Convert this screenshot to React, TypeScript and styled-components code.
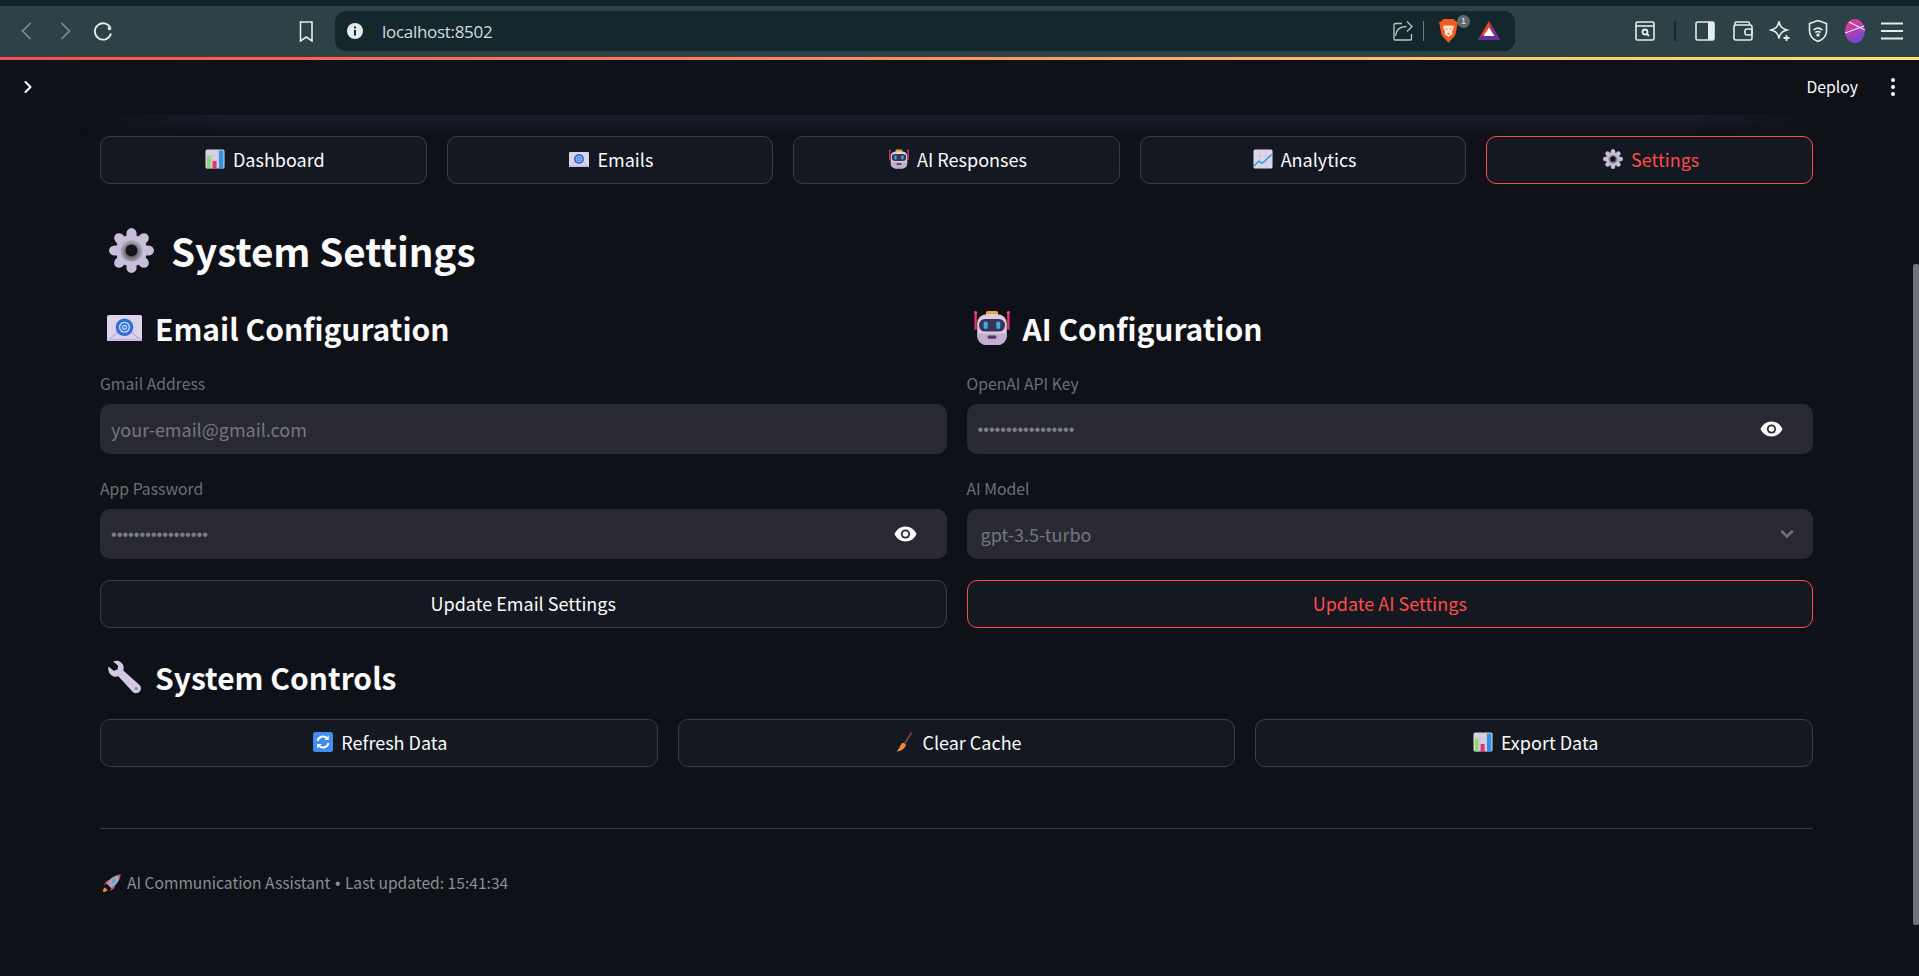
import { ReactNode } from "react";
import styled, { createGlobalStyle } from "styled-components";
import { ChevronDown, ChevronRight } from "lucide-react";

const UI_FONT = `"Noto Sans CJK SC", "Noto Sans", sans-serif`;

const GlobalStyle = createGlobalStyle`
  html, body {
    margin: 0;
    height: 100%;
    overflow: hidden;
    background: #0e1117;
  }
  * { box-sizing: border-box; }
`;

const Window = styled.div`
  width: 100%;
  height: 976px;
  display: flex;
  flex-direction: column;
  overflow: hidden;
  position: relative;
`;

/* ---- browser chrome ---- */

const TabStrip = styled.div`
  height: 6px;
  background: #0e2529;
`;

const Toolbar = styled.div`
  height: 51px;
  background: #2c4246;
  display: flex;
  align-items: center;
  padding: 0 0 1px 8px;
  color: #e6ecec;
`;

const ToolButton = styled.div<{ $w?: number; $dim?: boolean }>`
  width: ${(p) => p.$w ?? 38}px;
  height: 40px;
  flex: none;
  display: flex;
  align-items: center;
  justify-content: center;
  position: relative;
  color: ${(p) => (p.$dim ? "#7f8f92" : "inherit")};
`;

const ToolSpacer = styled.div<{ $w: number }>`
  width: ${(p) => p.$w}px;
  flex: none;
`;

const AddressPill = styled.div`
  width: 1180px;
  height: 40px;
  flex: none;
  background: #12282d;
  border-radius: 11px;
  display: flex;
  align-items: center;
  padding: 0 15px 0 12px;
`;

const SiteInfo = styled.div`
  width: 35px;
  flex: none;
  display: flex;
`;

const UrlText = styled.span`
  font-family: "Open Sans", sans-serif;
  font-size: 17px;
  color: #d5dcdd;
  letter-spacing: -0.3px;
  flex: 1;
`;

const ShareButton = styled(ToolButton)`
  color: #bcc6c7;
`;

const PillDivider = styled.div`
  width: 1px;
  height: 20px;
  background: #6b7d80;
  flex: none;
`;

const Badge = styled.span`
  position: absolute;
  top: 4px;
  left: 21px;
  width: 13px;
  height: 13px;
  border-radius: 50%;
  background: #5e6a70;
  color: #e8e8e8;
  font-family: "Liberation Sans", sans-serif;
  font-size: 9px;
  line-height: 13px;
  text-align: center;
`;

const ToolDivider = styled.div`
  width: 2px;
  height: 20px;
  background: #12282d;
  flex: none;
`;

const LoadLine = styled.div`
  height: 3px;
  background: linear-gradient(90deg, #fb4d4f 0%, #fd8a5e 45%, #ffc56d 75%, #fee26b 100%);
`;

/* ---- streamlit page ---- */

const Page = styled.main`
  flex: 1;
  background: #0e1117;
  font-family: ${UI_FONT};
  color: #fafafa;
  position: relative;
`;

const AppHeader = styled.header`
  height: 55px;
  display: flex;
  align-items: center;
  padding: 0 21px 2px 18px;
`;

const SidebarToggle = styled.div`
  display: flex;
  color: #fafafa;
`;

const DeployLabel = styled.span`
  margin-left: auto;
  font-size: 15.75px;
  line-height: 24px;
`;

const MenuDots = styled.div`
  display: flex;
  flex-direction: column;
  gap: 3px;
  margin-left: 33px;
  padding-right: 3px;
`;

const Dot = styled.i`
  width: 4px;
  height: 4px;
  border-radius: 50%;
  background: #fafafa;
`;

const Content = styled.div`
  padding: 0 106px 0 100px;
`;

const TopGlow = styled.div`
  height: 21px;
  margin: 0 -20px;
  background: linear-gradient(180deg, #1a1c2d 0%, #0e1117 100%);
  mask-image: linear-gradient(90deg, transparent 0, #000 8%, #000 92%, transparent 100%);
`;

const Columns = styled.div<{ $n: number }>`
  display: grid;
  grid-template-columns: repeat(${(p) => p.$n}, minmax(0, 1fr));
  column-gap: 20px;
`;

const Button = styled.div<{ $active?: boolean }>`
  height: 48px;
  border-radius: 10px;
  border: 1px solid ${(p) => (p.$active ? "#ff4b4b" : "#3b3d45")};
  background: #141820;
  color: ${(p) => (p.$active ? "#ff4b4b" : "#fafafa")};
  display: flex;
  align-items: center;
  justify-content: center;
  gap: 8px;
  padding: 0 0 2px 3px;
  font-size: 18px;
  line-height: 28px;
`;

const Title = styled.h1`
  margin: 38px 0 0;
  height: 56px;
  display: flex;
  align-items: center;
  gap: 17px;
  padding-left: 9px;
  font-size: 38.6px;
  line-height: 56px;
  font-weight: 700;
`;

const Heading = styled.h2<{ $top: number }>`
  margin: ${(p) => p.$top}px 0 0;
  height: 41px;
  display: flex;
  align-items: center;
  gap: 13px;
  padding: 0 0 1px 7px;
  font-size: 30px;
  line-height: 40px;
  font-weight: 600;
`;

const Field = styled.div`
  margin-top: 23px;
`;

const FieldLabel = styled.label`
  display: block;
  height: 24px;
  margin-bottom: 8px;
  font-size: 15.75px;
  line-height: 24px;
  color: #6d6e75;
`;

const InputShell = styled.div`
  height: 50px;
  border-radius: 10px;
  background: #282932;
  display: flex;
  align-items: center;
  padding: 0 29px 0 11px;
  color: #75767d;
  font-size: 18px;
  line-height: 28px;
`;

const Masked = styled.span`
  flex: 1;
  font-family: "Liberation Sans", sans-serif;
  font-size: 16.3px;
  color: #7c7d84;
`;

const SelectValue = styled.span`
  flex: 1;
  padding-left: 3px;
`;

const SelectChevron = styled.div`
  display: flex;
  color: #6f7077;
  margin-right: -13px;
`;

const FieldButton = styled(Button)`
  margin-top: 21px;
  padding-left: 0;
`;

const ControlRow = styled(Columns)`
  margin-top: 21px;
`;

const Rule = styled.hr`
  margin: 61px 0 0;
  border: 0;
  border-top: 1px solid #3a3c43;
`;

const Footer = styled.footer`
  margin-top: 41px;
  display: flex;
  align-items: center;
  gap: 6px;
  padding-left: 2px;
  font-size: 15.6px;
  line-height: 24px;
  color: #8b8d94;
`;

const Bullet = styled.span`
  font-family: "Liberation Sans", sans-serif;
  margin: 0 1px;
`;

const ScrollThumb = styled.div`
  position: absolute;
  right: 0;
  top: 204px;
  width: 6px;
  height: 661px;
  border-radius: 2px;
  background: #717277;
`;

/* ---- emoji drawings ---- */

const BarsEmoji = ({ size = 20 }: { size?: number }) => (
  <svg width={size} height={size} viewBox="0 0 20 20">
    <rect x="0.5" y="0.5" width="19" height="19" rx="1.5" fill="#d8d3e0" />
    <path d="M0.5 6.5h19M0.5 12h19M7 .5v19M13 .5v19" stroke="#c3bdce" strokeWidth="0.6" />
    <rect x="2" y="7" width="3.6" height="12.5" fill="#8fd86c" />
    <rect x="7.6" y="12" width="4" height="7.5" fill="#e92f73" />
    <rect x="14" y="1.5" width="4.4" height="18" fill="#2f93ea" />
  </svg>
);

const MailEmoji = ({ size = 20 }: { size?: number }) => (
  <svg width={size} height={(size * 15) / 20} viewBox="0 0 20 15">
    <rect width="20" height="15" rx="1" fill="#dfd3ec" />
    <path d="M0 15l7-6M20 15l-7-6" stroke="#c2aedb" strokeWidth="0.8" />
    <rect y="13.4" width="20" height="1.6" fill="#cdb8e8" />
    <circle cx="10" cy="7" r="5" fill="#2f6fd8" />
    <circle cx="10" cy="7" r="2.8" fill="none" stroke="#c9dcf8" strokeWidth="0.8" />
    <circle cx="10" cy="7" r="1.1" fill="none" stroke="#c9dcf8" strokeWidth="0.7" />
  </svg>
);

const RobotEmoji = ({ size = 20 }: { size?: number }) => (
  <svg width={size} height={size} viewBox="0 0 20 20">
    <rect x="6.6" y="0.6" width="6.8" height="2.6" rx="1" fill="#f0a92e" />
    <path d="M0.9 2v9M19.1 2v9" stroke="#e8356f" strokeWidth="1.3" />
    <circle cx="0.9" cy="1.4" r="0.9" fill="#f2477c" />
    <circle cx="19.1" cy="1.4" r="0.9" fill="#f2477c" />
    <rect x="1.8" y="2.4" width="16.4" height="17" rx="5" fill="#dccde6" />
    <path d="M1.8 13h16.4v1.4a5 5 0 0 1-5 5H6.800a5 5 0 0 1-5-5z" fill="#c6add0" />
    <rect x="2.8" y="5" width="14.4" height="7" rx="3.200" fill="#3b3554" />
    <rect x="5.400" y="6.4" width="2.200" height="4.200" rx="1" fill="#2fb2f2" />
    <rect x="12.400" y="6.400" width="2.200" height="4.200" rx="1" fill="#2fb2f2" />
    <rect x="7.600" y="14.200" width="4.800" height="1.800" rx="0.600" fill="#4a3f5e" />
  </svg>
);

const TrendEmoji = ({ size = 20 }: { size?: number }) => (
  <svg width={size} height={size} viewBox="0 0 20 20">
    <rect x="0.5" y="0.5" width="19" height="19" rx="1.500" fill="#ddd7e8" />
    <path d="M0.500 7h19M0.500 13h19M7 .5v19M13 .5v19" stroke="#c5bfd6" strokeWidth="0.6" />
    <path d="M1 17l5-5 3 2.500 9.500-9" fill="none" stroke="#3a9be8" strokeWidth="1.600" />
  </svg>
);

const GearEmoji = ({ size = 20 }: { size?: number }) => (
  <svg width={size} height={size} viewBox="0 0 44 44">
    <defs>
      <radialGradient id="gearHub" cx="50%" cy="55%" r="60%">
        <stop offset="45%" stopColor="#6f6a78" />
        <stop offset="100%" stopColor="#d8d2e2" />
      </radialGradient>
    </defs>
    {[0, 45, 90, 135, 180, 225, 270, 315].map((a) => (
      <ellipse key={a} cx="22" cy="5.500" rx="5" ry="5.500" fill="#c9bedb" transform={`rotate(${a} 22 22)`} />
    ))}
    <circle cx="22" cy="22" r="15.500" fill="#c9bedb" />
    <circle cx="22" cy="22" r="11" fill="url(#gearHub)" />
    <circle cx="22" cy="22" r="5.800" fill="#14151c" />
  </svg>
);

const WrenchEmoji = ({ size = 35 }: { size?: number }) => (
  <svg width={size} height={size} viewBox="0 0 34 34">
    <path
      d="M1.500 6.200 6.500 10.400 10.200 9.300 10.800 5.600 6 1.400C10-.2 14.800 1.600 16 6c.4 1.700.2 3-.2 4.200L31.400 24c1.900 1.700 2.100 4.800.4 6.700-1.800 2-4.800 2.100-6.700.300L11 15.900c-1.500.5-3.300.6-5-.100-3.800-1.500-5.700-5.700-4.500-9.600z"
      fill="#d3c8e2"
    />
    <circle cx="28.300" cy="27.700" r="1.500" fill="#8d7fa6" />
  </svg>
);

const RefreshEmoji = ({ size = 20 }: { size?: number }) => (
  <svg width={size} height={size} viewBox="0 0 20 20">
    <rect width="20" height="20" rx="2.500" fill="#3f8df0" />
    <path
      d="M4.500 9a5.600 5.600 0 0 1 9.400-2.900M15.500 11a5.600 5.600 0 0 1-9.400 2.900"
      fill="none"
      stroke="#fff"
      strokeWidth="2"
    />
    <path d="M15.800 3.400v4.700h-4.700zM4.200 16.600v-4.700h4.700z" fill="#fff" />
  </svg>
);

const BroomEmoji = ({ size = 20 }: { size?: number }) => (
  <svg width={size} height={size} viewBox="0 0 20 20">
    <path d="M17.500 .5 10 12.500" stroke="#8a4a3c" strokeWidth="1.500" />
    <path d="M8.500 10.500l3.500 2.200C11.500 15.500 8 19 2.500 19.500 5 17.500 5.800 13.500 8.500 10.500z" fill="#f28a3c" />
  </svg>
);

const RocketEmoji = ({ size = 19 }: { size?: number }) => (
  <svg width={size} height={size} viewBox="0 0 18 18">
    <path d="M1 17c-.3-2 .3-3.500 1.800-4.300l2.500 2.500C4.500 16.700 3 17.300 1 17z" fill="#e8892e" />
    <path d="M4.500 9.200 1.800 10.300 4 7c.8-.9 2-1.200 3-1z" fill="#e0487a" />
    <path d="M8.800 13.500 7.700 16.200 11 14c.9-.8 1.200-2 1-3z" fill="#e0487a" />
    <path d="M4.500 9.200C7 4.500 11.500 1.300 17.500.5 16.700 6.500 13.500 11 8.800 13.500z" fill="#a9a0b4" />
    <path d="M13.500 1.100c1.100.4 2.900 2.200 3.400 3.400.3-1.300.5-2.700.6-4-1.300.1-2.700.3-4 .6z" fill="#e0487a" />
    <circle cx="11.300" cy="6.700" r="1.800" fill="#5aa7d8" />
  </svg>
);

/* ---- browser icons ---- */

const Stroke = ({ w = 22, h = 22, sw = 1.6, children }: { w?: number; h?: number; sw?: number; children: ReactNode }) => (
  <svg width={w} height={h} viewBox={`0 0 ${w} ${h}`} fill="none" stroke="currentColor" strokeWidth={sw}>
    {children}
  </svg>
);

const BraveIcon = () => (
  <svg width="19" height="24" viewBox="0 0 19 24">
    <path d="M4.500 0h10L17 2.500l2 .5-1 5-1.500 7.500c-.5 2-4.500 5-7 8.500-2.500-3.500-6.500-6.500-7-8.500L1 8 0 3l2-.5z" fill="#f15a22" />
    <path d="M5 6.500h9l1 2-2 4 .5 2.500L9.500 18l-4-3 .5-2.500-2-4z" fill="#fde3d4" />
    <path d="M6.500 9.500h2L8 11zM10.500 9.500h2L11 11zM8 14h3L9.500 15.500z" fill="#f15a22" />
  </svg>
);

const BatIcon = () => (
  <svg width="22" height="22" viewBox="0 0 22 22">
    <path d="M11 1 22 20H0z" fill="#e8452c" />
    <path d="M11 1 22 20h-6z" fill="#8a2a8a" />
    <path d="M0 20l4-5h14l4 5z" fill="#66309a" />
    <path d="M11 7.500 16.500 16H5.500z" fill="#fff" />
  </svg>
);

const AvatarIcon = () => (
  <svg width="20" height="24" viewBox="0 0 20 24">
    <defs>
      <linearGradient id="avatarFill" x1="0.2" y1="0" x2="0.7" y2="1">
        <stop offset="0%" stopColor="#f0388f" />
        <stop offset="100%" stopColor="#6a48dc" />
      </linearGradient>
    </defs>
    <ellipse cx="10" cy="12" rx="10" ry="12" fill="url(#avatarFill)" />
    <path d="M0 14 19 7M4 3l16 8" stroke="#f4e9f2" strokeWidth="1.100" />
  </svg>
);

const EyeIcon = () => (
  <svg width="25" height="16" viewBox="0 0 24 16">
    <path d="M12 .5C7 .5 2.800 3.600 1 8c1.800 4.400 6 7.500 11 7.500S21.200 12.400 23 8C21.200 3.600 17 .5 12 .5z" fill="#fafafa" />
    <circle cx="12" cy="8" r="4.600" fill="#282932" />
    <circle cx="12" cy="8" r="2.800" fill="#fafafa" />
  </svg>
);

const PasswordField = () => (
  <InputShell>
    <Masked>•••••••••••••••••</Masked>
    <EyeIcon />
  </InputShell>
);

export default function App() {
  return (
    <Window>
      <GlobalStyle />
      <TabStrip />
      <Toolbar>
        <ToolButton $dim>
          <Stroke>
            <path d="M14.500 3 6.500 11l8 8" />
          </Stroke>
        </ToolButton>
        <ToolButton $dim>
          <Stroke>
            <path d="M7.500 3l8 8-8 8" />
          </Stroke>
        </ToolButton>
        <ToolButton>
          <Stroke sw={1.800}>
            <path d="M18.500 8A8.200 8.200 0 1 0 19 13.500" />
            <circle cx="17.500" cy="8.500" r="1.800" fill="currentColor" stroke="none" />
          </Stroke>
        </ToolButton>
        <ToolSpacer $w={164} />
        <ToolButton $w={39}>
          <Stroke>
            <path d="M5.500 2h11.500v19l-5.700-4-5.800 4z" />
          </Stroke>
        </ToolButton>
        <ToolSpacer $w={10} />
        <AddressPill>
          <SiteInfo>
            <svg width="16" height="16" viewBox="0 0 16 16">
              <circle cx="8" cy="8" r="8" fill="#e6ecec" />
              <rect x="7" y="7" width="2" height="5.500" fill="#12282d" />
              <rect x="7" y="3.500" width="2" height="2" fill="#12282d" />
            </svg>
          </SiteInfo>
          <UrlText>localhost:8502</UrlText>
          <ShareButton $w={28}>
            <Stroke sw={1.300}>
              <path d="M10 3.500H3.500a1.500 1.500 0 0 0-1.500 1.500v14a1 1 0 0 0 1 1h15.500a1 1 0 0 0 1-1v-5M3.500 16c.5-6 4.500-9.500 11-9.500M15 1.500l5 5-5 5" />
            </Stroke>
          </ShareButton>
          <ToolSpacer $w={6} />
          <PillDivider />
          <ToolSpacer $w={12} />
          <ToolButton $w={24}>
            <BraveIcon />
            <Badge>1</Badge>
          </ToolButton>
          <ToolSpacer $w={18} />
          <ToolButton $w={22}>
            <BatIcon />
          </ToolButton>
        </AddressPill>
        <ToolSpacer $w={109} />
        <ToolButton $w={41}>
          <Stroke w={20} h={20}>
            <rect x="1" y="1" width="18" height="18" rx="1.500" />
            <path d="M1 5h18" />
            <circle cx="10" cy="11" r="2.500" strokeWidth="1.800" />
            <path d="M12 13l2 2" strokeWidth="1.800" />
          </Stroke>
        </ToolButton>
        <ToolSpacer $w={9} />
        <ToolDivider />
        <ToolSpacer $w={10} />
        <ToolButton $w={38}>
          <svg width="20" height="20" viewBox="0 0 20 20">
            <rect x="1" y="1" width="18" height="18" rx="1.500" fill="none" stroke="currentColor" strokeWidth="1.600" />
            <rect x="13" y="1" width="6" height="18" rx="1" fill="currentColor" />
          </svg>
        </ToolButton>
        <ToolButton $w={37}>
          <Stroke w={20} h={20}>
            <path d="M2 4V2.500A1.500 1.500 0 0 1 3.500 1H15a1.500 1.500 0 0 1 1.500 1.500V4" />
            <rect x="1" y="4" width="18" height="15" rx="2" />
            <rect x="12" y="8" width="7" height="6" rx="2" />
          </Stroke>
        </ToolButton>
        <ToolButton $w={38}>
          <Stroke>
            <path d="M10 1.500c1 5 2.500 7 8 8.500-5.500 1.500-7 3.500-8 8.500-1-5-2.500-7-8-8.500 5.500-1.500 7-3.500 8-8.500z" />
            <path d="M17.500 15v6M14.500 18h6" strokeWidth="1.800" />
          </Stroke>
        </ToolButton>
        <ToolButton $w={37}>
          <Stroke>
            <path d="M11 .5 19.500 3.500v7.500c0 5-3.200 8.300-8.500 10.500C5.700 19.300 2.500 16 2.500 11V3.500z" />
            <path d="M6.500 10c2.800-2.300 6.200-2.300 9 0M8.300 12.500c1.700-1.200 3.700-1.200 5.400 0" />
            <circle cx="11" cy="15" r="0.900" fill="currentColor" />
          </Stroke>
        </ToolButton>
        <ToolButton $w={37}>
          <AvatarIcon />
        </ToolButton>
        <ToolButton $w={38}>
          <svg width="22" height="18" viewBox="0 0 22 18" fill="currentColor">
            <rect width="22" height="2" y="0.500" />
            <rect width="22" height="2" y="8" />
            <rect width="22" height="2" y="15.500" />
          </svg>
        </ToolButton>
      </Toolbar>
      <LoadLine />
      <Page>
        <AppHeader>
          <SidebarToggle>
            <ChevronRight size={20} strokeWidth={2.500} />
          </SidebarToggle>
          <DeployLabel>Deploy</DeployLabel>
          <MenuDots>
            <Dot />
            <Dot />
            <Dot />
          </MenuDots>
        </AppHeader>
        <Content>
          <TopGlow />
          <Columns $n={5}>
            <Button>
              <BarsEmoji />
              Dashboard
            </Button>
            <Button>
              <MailEmoji />
              Emails
            </Button>
            <Button>
              <RobotEmoji />
              AI Responses
            </Button>
            <Button>
              <TrendEmoji />
              Analytics
            </Button>
            <Button $active>
              <GearEmoji />
              Settings
            </Button>
          </Columns>
          <Title>
            <GearEmoji size={45} />
            System Settings
          </Title>
          <Columns $n={2}>
            <div>
              <Heading $top={30}>
                <MailEmoji size={35} />
                Email Configuration
              </Heading>
              <Field>
                <FieldLabel>Gmail Address</FieldLabel>
                <InputShell>your-email@gmail.com</InputShell>
              </Field>
              <Field>
                <FieldLabel>App Password</FieldLabel>
                <PasswordField />
              </Field>
              <FieldButton>Update Email Settings</FieldButton>
            </div>
            <div>
              <Heading $top={30}>
                <RobotEmoji size={36} />
                AI Configuration
              </Heading>
              <Field>
                <FieldLabel>OpenAI API Key</FieldLabel>
                <PasswordField />
              </Field>
              <Field>
                <FieldLabel>AI Model</FieldLabel>
                <InputShell>
                  <SelectValue>gpt-3.5-turbo</SelectValue>
                  <SelectChevron>
                    <ChevronDown size={20} strokeWidth={3} />
                  </SelectChevron>
                </InputShell>
              </Field>
              <FieldButton $active>Update AI Settings</FieldButton>
            </div>
          </Columns>
          <Heading $top={29}>
            <WrenchEmoji />
            System Controls
          </Heading>
          <ControlRow $n={3}>
            <Button>
              <RefreshEmoji />
              Refresh Data
            </Button>
            <Button>
              <BroomEmoji />
              Clear Cache
            </Button>
            <Button>
              <BarsEmoji />
              Export Data
            </Button>
          </ControlRow>
          <Rule />
          <Footer>
            <RocketEmoji />
            <span>
              AI Communication Assistant <Bullet>•</Bullet> Last updated: 15:41:34
            </span>
          </Footer>
        </Content>
        <ScrollThumb />
      </Page>
    </Window>
  );
}
